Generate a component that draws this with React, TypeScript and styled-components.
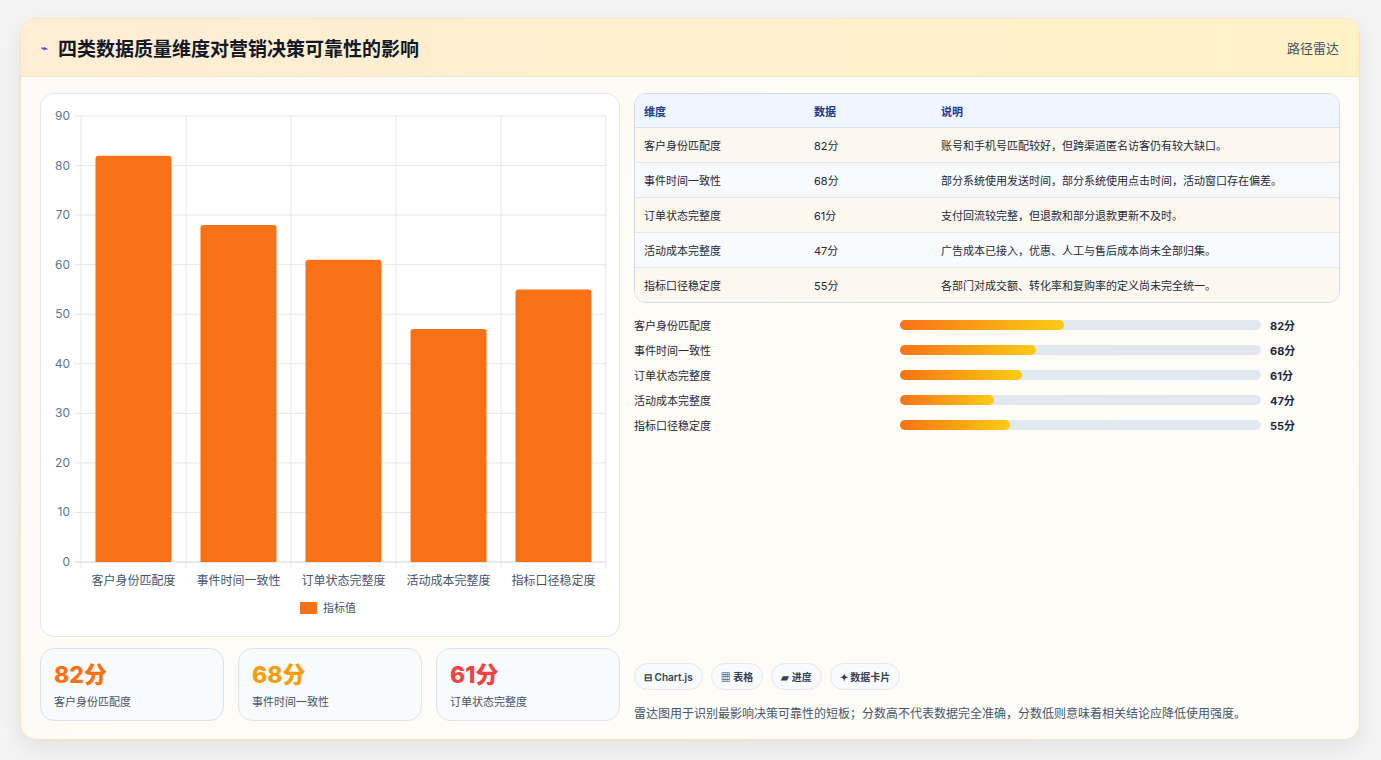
import React from "react";
import styled, { createGlobalStyle } from "styled-components";

const GlobalStyle = createGlobalStyle`
  body {
    margin: 0;
    background: #f4f4f5;
    font-family: Inter, "Noto Sans CJK SC", "Noto Sans", sans-serif;
  }
`;

const Page = styled.div`
  padding: 18px 20px 20px 20px;
`;

const Card = styled.div`
  width: 1340px;
  height: 722px;
  box-sizing: border-box;
  border: 1px solid #fbe3c0;
  border-radius: 16px;
  background: linear-gradient(135deg, #fffaf3, #fffdf8);
  box-shadow: 0 8px 24px rgba(0, 0, 0, 0.08);
  overflow: hidden;
  display: flex;
  flex-direction: column;
`;

const Header = styled.div`
  height: 57px;
  flex-shrink: 0;
  display: flex;
  align-items: center;
  justify-content: space-between;
  padding: 0 20px;
  background: linear-gradient(90deg, #ffedd5, #fef3c7);
  border-bottom: 1px solid #f3e4cf;
`;

const Title = styled.h1`
  margin: 0;
  font-size: 19px;
  font-weight: 700;
  color: #111827;
  display: flex;
  align-items: center;
  gap: 10px;
`;

const Bolt = styled.span`
  color: #4f46e5;
  font-size: 11px;
`;

const HeaderTag = styled.span`
  font-size: 13px;
  color: #475569;
`;

const Body = styled.div`
  flex: 1;
  display: grid;
  grid-template-columns: 580px 1fr;
  gap: 14px;
  padding: 16px 19px 19px 19px;
`;

const LeftCol = styled.div`
  display: flex;
  flex-direction: column;
  gap: 11px;
`;

const ChartCard = styled.div`
  height: 544px;
  box-sizing: border-box;
  background: #fff;
  border: 1px solid #e2e8f0;
  border-radius: 14px;
  position: relative;
`;

const Stats = styled.div`
  display: grid;
  grid-template-columns: repeat(3, 1fr);
  gap: 14px;
`;

const Stat = styled.div`
  height: 73px;
  box-sizing: border-box;
  border: 1px solid #dbe5f1;
  border-radius: 14px;
  background: #f8fafc;
  padding: 12px 13px;
`;

const StatValue = styled.div<{ $c: string }>`
  font-size: 23px;
  font-weight: 800;
  color: ${(p) => p.$c};
  line-height: 28px;
`;

const StatLabel = styled.div`
  font-size: 11px;
  color: #475569;
  margin-top: 4px;
`;

const RightCol = styled.div`
  display: flex;
  flex-direction: column;
`;

const Table = styled.table`
  width: 100%;
  border-collapse: separate;
  border-spacing: 0;
  border: 1px solid #cfdbea;
  border-radius: 12px;
  overflow: hidden;
  font-size: 11px;
  color: #1f2937;
`;

const Th = styled.th`
  text-align: left;
  font-weight: 600;
  color: #1e3a8a;
  background: #eff6ff;
  height: 33px;
  padding: 0 9px;
  border-bottom: 1px solid #d7e2ef;
`;

const Tr = styled.tr<{ $odd: boolean }>`
  background: ${(p) => (p.$odd ? "#fdf8ef" : "#f8fafc")};
`;

const Td = styled.td<{ $last: boolean }>`
  height: 34px;
  padding: 0 9px;
  border-bottom: ${(p) => (p.$last ? "none" : "1px solid #dfe7f0")};
`;

const Bars = styled.div`
  display: flex;
  flex-direction: column;
  gap: 6px;
  margin-top: 12px;
`;

const BarRow = styled.div`
  display: grid;
  grid-template-columns: 266px 370px 40px;
  align-items: center;
  gap: 0;
  height: 19px;
  font-size: 11px;
  color: #1f2937;
`;

const Track = styled.div`
  height: 10px;
  border-radius: 5px;
  background: #e2e8f0;
  margin-right: 9px;
`;

const Fill = styled.div`
  height: 100%;
  border-radius: 5px;
  background: linear-gradient(90deg, #f97316, #facc15);
`;

const BarValue = styled.span`
  font-weight: 700;
`;

const Spacer = styled.div`
  flex: 1;
`;

const Chips = styled.div`
  display: flex;
  gap: 8px;
`;

const Chip = styled.span`
  height: 27px;
  box-sizing: border-box;
  padding: 0 9px;
  border: 1px solid #e2e8f0;
  border-radius: 14px;
  background: #f8fafc;
  font-size: 10px;
  font-weight: 600;
  color: #334155;
  display: flex;
  align-items: center;
  gap: 4px;
`;

const Note = styled.p`
  margin: 14px 0 0;
  font-size: 12px;
  color: #475569;
`;

const data = [
  { name: "客户身份匹配度", v: 82, note: "账号和手机号匹配较好，但跨渠道匿名访客仍有较大缺口。" },
  { name: "事件时间一致性", v: 68, note: "部分系统使用发送时间，部分系统使用点击时间，活动窗口存在偏差。" },
  { name: "订单状态完整度", v: 61, note: "支付回流较完整，但退款和部分退款更新不及时。" },
  { name: "活动成本完整度", v: 47, note: "广告成本已接入，优惠、人工与售后成本尚未全部归集。" },
  { name: "指标口径稳定度", v: 55, note: "各部门对成交额、转化率和复购率的定义尚未完全统一。" },
];

const BarChart = () => {
  const x0 = 40, top = 22, h = 446, w = 525;
  const slot = w / 5;
  const y = (v: number) => top + h - (v / 90) * h;
  return (
    <svg width="578" height="542" style={{ display: "block" }}>
      {[0, 10, 20, 30, 40, 50, 60, 70, 80, 90].map((t) => (
        <g key={t}>
          <line x1={x0 - 6} x2={x0 + w} y1={y(t)} y2={y(t)} stroke={t === 0 ? "#cbd5e1" : "#e5e7eb"} />
          <text x={x0 - 11} y={y(t) + 4} fontSize="12" fill="#64748b" textAnchor="end" fontFamily="Inter, sans-serif">{t}</text>
        </g>
      ))}
      {[0, 1, 2, 3, 4, 5].map((i) => (
        <line key={i} x1={x0 + i * slot} x2={x0 + i * slot} y1={top} y2={top + h + 6} stroke="#e5e7eb" />
      ))}
      {data.map((d, i) => (
        <g key={d.name}>
          <path
            d={`M${x0 + i * slot + 14.5} ${top + h} V${y(d.v) + 3} q0 -3 3 -3 H${x0 + i * slot + 87.5} q3 0 3 3 V${top + h} Z`}
            fill="#f97316"
          />
          <text x={x0 + i * slot + slot / 2} y={top + h + 23} fontSize="12" fill="#475569" textAnchor="middle" fontFamily="'Noto Sans CJK SC', sans-serif">{d.name}</text>
        </g>
      ))}
      <rect x="259" y="508" width="17" height="12" fill="#f97316" />
      <text x="282" y="518" fontSize="11" fill="#475569" fontFamily="'Noto Sans CJK SC', sans-serif">指标值</text>
    </svg>
  );
};

const statColors = ["#f97316", "#f59e0b", "#ef4444"];

export default function App() {
  return (
    <Page>
      <GlobalStyle />
      <Card>
        <Header>
          <Title><Bolt>⌁</Bolt>四类数据质量维度对营销决策可靠性的影响</Title>
          <HeaderTag>路径雷达</HeaderTag>
        </Header>
        <Body>
          <LeftCol>
            <ChartCard><BarChart /></ChartCard>
            <Stats>
              {data.slice(0, 3).map((d, i) => (
                <Stat key={d.name}>
                  <StatValue $c={statColors[i]}>{d.v}分</StatValue>
                  <StatLabel>{d.name}</StatLabel>
                </Stat>
              ))}
            </Stats>
          </LeftCol>
          <RightCol>
            <Table>
              <thead>
                <tr>
                  <Th style={{ width: 152 }}>维度</Th>
                  <Th style={{ width: 109 }}>数据</Th>
                  <Th>说明</Th>
                </tr>
              </thead>
              <tbody>
                {data.map((d, i) => (
                  <Tr key={d.name} $odd={i % 2 === 0}>
                    <Td $last={i === 4}>{d.name}</Td>
                    <Td $last={i === 4}>{d.v}分</Td>
                    <Td $last={i === 4}>{d.note}</Td>
                  </Tr>
                ))}
              </tbody>
            </Table>
            <Bars>
              {data.map((d) => (
                <BarRow key={d.name}>
                  <span>{d.name}</span>
                  <Track><Fill style={{ width: `${(d.v / 180) * 100}%` }} /></Track>
                  <BarValue>{d.v}分</BarValue>
                </BarRow>
              ))}
            </Bars>
            <Spacer />
            <Chips>
              <Chip>⊟ Chart.js</Chip>
              <Chip>▦ 表格</Chip>
              <Chip>▰ 进度</Chip>
              <Chip>✦ 数据卡片</Chip>
            </Chips>
            <Note>雷达图用于识别最影响决策可靠性的短板；分数高不代表数据完全准确，分数低则意味着相关结论应降低使用强度。</Note>
          </RightCol>
        </Body>
      </Card>
    </Page>
  );
}
